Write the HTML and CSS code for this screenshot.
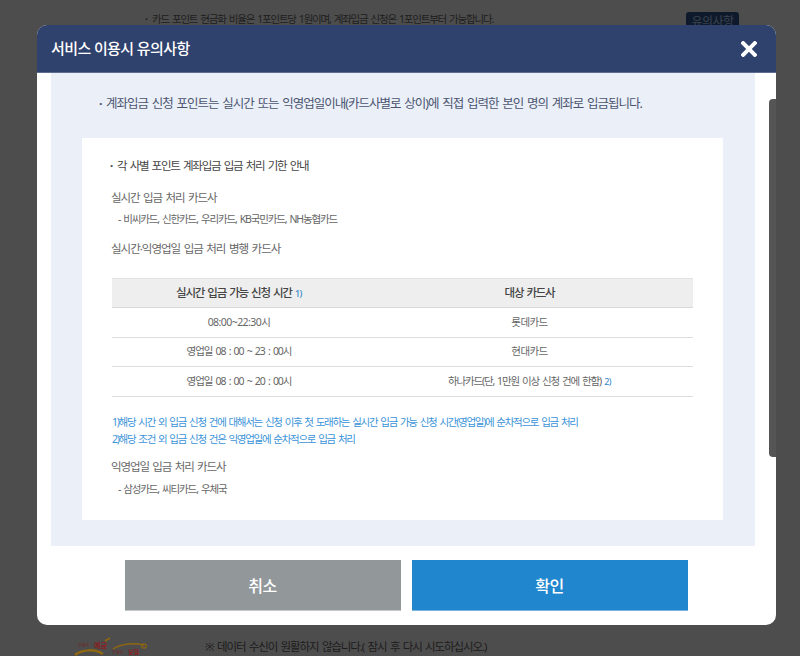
FILE: index.html
```html
<!DOCTYPE html>
<html lang="ko">
<head>
<meta charset="utf-8">
<title>서비스 이용시 유의사항</title>
<link rel="stylesheet" href="styles.css">
</head>
<body>
<div class="page">
  <div class="page-top">
    <p class="page-note"><span class="dot">·</span>카드 포인트 현금화 비율은 1포인트당 1원이며, 계좌입금 신청은 1포인트부터 가능합니다.</p>
    <span class="page-btn">유의사항</span>
  </div>
  <div class="page-bottom">
    <svg class="page-logo" width="72" height="20" viewBox="0 0 72 20">
      <path d="M0 19 C8 13 20 13 28 18" fill="none" stroke="#8f670f" stroke-width="2.5"/>
      <path d="M38 13 C47 7 60 7 69 9" fill="none" stroke="#8f670f" stroke-width="1.5"/>
      <path d="M30 5 L35 2" fill="none" stroke="#8f670f" stroke-width="2"/>
      <circle cx="69" cy="10" r="2.2" fill="none" stroke="#8f670f" stroke-width="1.2"/>
      <text x="3" y="11" class="logo-s">우체국</text>
      <text x="19" y="12" class="logo-b">예금</text>
      <text x="37" y="18" class="logo-s">우체국</text>
      <text x="53" y="18" class="logo-m">보험</text>
    </svg>
    <p class="page-msg">※ 데이터 수신이 원활하지 않습니다.( 잠시 후 다시 시도하십시오.)</p>
  </div>
</div>
<div class="modal">
  <header class="modal-head">
    <h2 class="modal-title">서비스 이용시 유의사항</h2>
    <svg class="modal-close" width="16" height="16" viewBox="0 0 16 16"><path d="M2.2 2.2 L13.8 13.8 M13.8 2.2 L2.2 13.8" stroke="#fff" stroke-width="4" stroke-linecap="square"/></svg>
  </header>
  <div class="modal-body">
    <div class="panel">
      <p class="lead"><span class="dot">·</span>계좌입금 신청 포인트는 실시간 또는 익영업일이내(카드사별로 상이)에 직접 입력한 본인 명의 계좌로 입금됩니다.</p>
      <div class="box">
        <p class="box-title"><span class="dot">·</span>각 사별 포인트 계좌입금 입금 처리 기한 안내</p>
        <p class="sub sub-a">실시간 입금 처리 카드사</p>
        <p class="cards cards-a">- 비씨카드, 신한카드, 우리카드, KB국민카드, NH농협카드</p>
        <p class="sub sub-b">실시간·익영업일 입금 처리 병행 카드사</p>
        <table class="tbl">
          <thead>
            <tr><th class="col-a">실시간 입금 가능 신청 시간 <sup class="mark">1)</sup></th><th>대상 카드사</th></tr>
          </thead>
          <tbody>
            <tr><td>08:00~22:30시</td><td>롯데카드</td></tr>
            <tr><td class="td-time">영업일 08 : 00 ~ 23 : 00시</td><td>현대카드</td></tr>
            <tr><td class="td-time">영업일 08 : 00 ~ 20 : 00시</td><td class="td-long">하나카드(단, 1만원 이상 신청 건에 한함) <sup class="mark">2)</sup></td></tr>
          </tbody>
        </table>
        <p class="foot foot-a">1)해당 시간 외 입금 신청 건에 대해서는 신청 이후 첫 도래하는 실시간 입금 가능 신청 시간(영업일)에 순차적으로 입금 처리</p>
        <p class="foot">2)해당 조건 외 입금 신청 건은 익영업일에 순차적으로 입금 처리</p>
        <p class="sub sub-c">익영업일 입금 처리 카드사</p>
        <p class="cards cards-c">- 삼성카드, 씨티카드, 우체국</p>
      </div>
    </div>
    <div class="actions">
      <button class="btn btn-cancel" type="button">취소</button>
      <button class="btn btn-ok" type="button">확인</button>
    </div>
    <div class="scroll-thumb"></div>
  </div>
</div>
</body>
</html>
```
FILE: styles.css
```css
* { box-sizing: border-box; }
html, body { margin: 0; padding: 0; height: 656px; overflow: hidden; }
body {
  position: relative;
  width: 800px;
  background: #4d4d4d;
  font-family: "Noto Sans", "Noto Sans CJK KR", sans-serif;
  color: #555;
  word-spacing: 1.5px;
}
p { margin: 0; }
.dot { display: inline-block; width: 7px; font-weight: 700; letter-spacing: 0; }
.page { display: flex; flex-direction: column; height: 656px; }
.page-top { display: flex; justify-content: space-between; padding: 12px 61px 0 145px; }
.page-note { font-size: 10.5px; line-height: 14px; color: #1d1d1d; letter-spacing: -1.2px; }
.page-btn { width: 53px; height: 30px; background: #0e1a2b; border-radius: 3px; color: #3b4450; font-size: 12px; text-align: center; line-height: 20px; letter-spacing: -0.6px; }
.page-bottom { display: flex; margin-top: auto; height: 26px; padding-left: 75px; }
.page-logo { display: block; margin-right: 58px; margin-top: 6px; overflow: visible; }
.logo-s { font-size: 4px; fill: #7a2020; letter-spacing: 0; }
.logo-b { font-size: 7px; font-weight: 700; fill: #8a2020; letter-spacing: 0; }
.logo-m { font-size: 6px; font-weight: 700; fill: #8a2020; letter-spacing: 0; }
.page-msg { font-size: 11.5px; line-height: 18px; padding-top: 8px; color: #1c1c1c; letter-spacing: -1.1px; white-space: nowrap; }

.modal {
  position: absolute;
  left: 37px; top: 25px;
  width: 739px; height: 600px;
  background: #fff;
  border-radius: 10px;
  overflow: hidden;
  display: flex;
  flex-direction: column;
}
.modal-head {
  height: 48px;
  flex: none;
  background: #2f416d;
  border-bottom: 1px solid #5d6c90;
  display: flex;
  align-items: center;
  justify-content: space-between;
  padding: 0 19px 0 14px;
}
.modal-title { margin: 0 0 2px; font-size: 15px; font-weight: 500; color: #fff; letter-spacing: -0.6px; word-spacing: 0; }
.modal-body { position: relative; flex: 1; padding: 0 21px 0 14px; }
.panel { height: 473px; background: #eaeff8; padding: 21px 32px 0 31px; }
.lead { font-size: 12.5px; line-height: 20px; color: #4c5570; padding-left: 17px; white-space: nowrap; letter-spacing: -1px; }
.box { margin-top: 24px; height: 382px; background: #fff; padding: 19px 30px 0 28px; }
.box-title { font-size: 11.5px; line-height: 17px; color: #444; letter-spacing: -1.22px; }
.sub { font-size: 11.5px; line-height: 17px; color: #666; padding-left: 1px; letter-spacing: -1.05px; }
.sub-a { margin-top: 15px; }
.cards { font-size: 10.5px; line-height: 16px; color: #666; padding-left: 8px; letter-spacing: -1.15px; white-space: nowrap; }
.cards-a { margin-top: 5px; }
.sub-b { margin-top: 13px; letter-spacing: -1px; }
.tbl { width: 581px; margin: 21px 0 0 2px; border-collapse: collapse; table-layout: fixed; font-size: 10.5px; color: #666; letter-spacing: -0.55px; }
.tbl th { height: 29px; background: #eee; border-top: 1px solid #e3e3e3; border-bottom: 1px solid #d9d9d9; font-size: 11.5px; font-weight: 500; color: #444; padding: 0 0 2px; letter-spacing: -1.25px; }
.tbl td { height: 29.6px; border-bottom: 1px solid #ddd; text-align: center; padding: 0 0 2px; }
.tbl .td-time { letter-spacing: -1.05px; }
.tbl .td-long { letter-spacing: -1.17px; }
.col-a { width: 254px; }
.mark { font-size: 9px; color: #2f86cc; vertical-align: baseline; line-height: 0; letter-spacing: -0.5px; }
.foot { font-size: 10.5px; line-height: 17px; color: #3a93d8; padding-left: 2px; white-space: nowrap; letter-spacing: -1.28px; }
.foot-a { margin-top: 17px; }
.sub-c { margin-top: 10px; letter-spacing: -1.1px; }
.cards-c { margin-top: 6px; }
.actions { display: flex; justify-content: center; gap: 11px; margin-top: 14px; padding-left: 6px; }
.btn { width: 276px; height: 51px; border: 0; color: #fff; font: 500 16px "Noto Sans CJK KR", sans-serif; letter-spacing: -0.5px; padding: 0; }
.btn-cancel { background: #92979a; border-bottom: 1px solid #c5c8ca; }
.btn-ok { background: #2086ce; border-bottom: 1px solid #7ab4de; }
.scroll-thumb { position: absolute; right: 0; top: 26px; width: 7px; height: 358px; background: #555; border-radius: 4px 0 0 4px; }
```
